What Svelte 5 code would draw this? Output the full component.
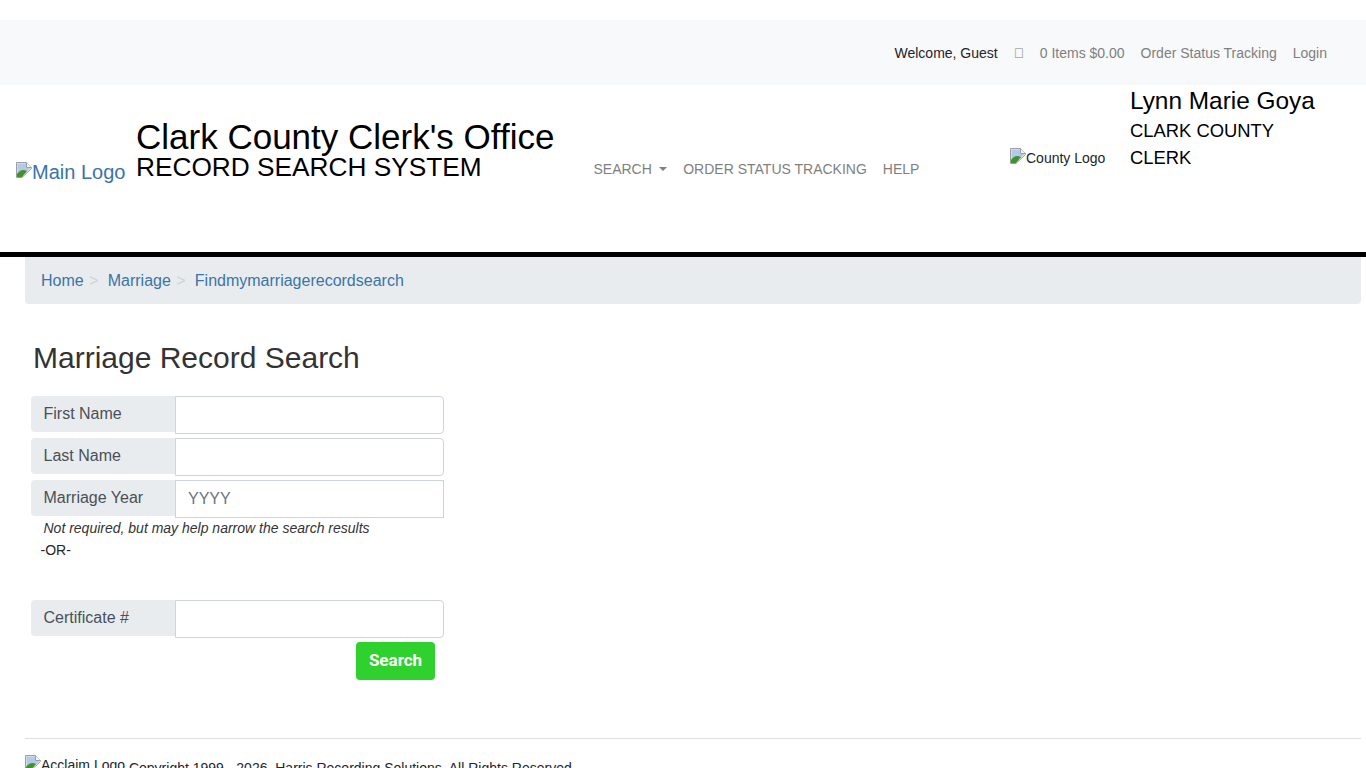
<script>
	const crumbs = ['Home', 'Marriage', 'Findmymarriagerecordsearch'];
	const nameRows = [
		{ label: 'First Name', placeholder: '', square: false },
		{ label: 'Last Name', placeholder: '', square: false },
		{ label: 'Marriage Year', placeholder: 'YYYY', square: true }
	];
</script>

{#snippet broken()}
	<svg class="broken" viewBox="0 0 16 16" width="16" height="16" aria-hidden="true">
		<path d="M.5.5h10l5 5v1L6 15.500H.5z" fill="#e8edf4" stroke="#9a9ea5" />
		<path d="M1.500 1.500h8.500v4.500h4.500L5.500 14.500h-4z" fill="#b4c9e6" />
		<path d="M1 15v-3c3-4 6-5 10-3l-5 6z" fill="#3f9429" />
		<path d="M10.500.5v5h5" fill="#f4f4f4" stroke="#9a9ea5" />
	</svg>
{/snippet}

<div class="top">
	<span class="welcome">Welcome, Guest</span>
	<a href="#cart" class="tofu">&#xf07a;</a>
	<a href="#cart">0 Items $0.00</a>
	<a href="#status">Order Status Tracking</a>
	<a href="#login">Login</a>
</div>

<header>
	<a href="#home" class="main-logo">{@render broken()}Main Logo</a>
	<div class="office">
		<div class="office-name">Clark County Clerk's Office</div>
		<div class="office-sub">RECORD SEARCH SYSTEM</div>
	</div>
	<nav>
		<a href="#search">SEARCH <i class="caret"></i></a>
		<a href="#status">ORDER STATUS TRACKING</a>
		<a href="#help">HELP</a>
	</nav>
	<div class="county-logo">{@render broken()}County Logo</div>
	<div class="clerk">
		<div class="clerk-name">Lynn Marie Goya</div>
		<div class="clerk-title">CLARK COUNTY CLERK</div>
	</div>
</header>

<main>
	<ol class="crumbs">
		{#each crumbs as crumb, i}
			{#if i > 0}<li class="sep">&gt;</li>{/if}
			<li><a href="#crumb">{crumb}</a></li>
		{/each}
	</ol>

	<h1>Marriage Record Search</h1>

	<form>
		{#each nameRows as row}
			<div class="group">
				<span class="addon">{row.label}</span>
				<input type="text" class:square={row.square} placeholder={row.placeholder} />
			</div>
		{/each}
		<p class="hint">Not required, but may help narrow the search results</p>
		<p class="or">-OR-</p>
		<div class="group cert">
			<span class="addon">Certificate #</span>
			<input type="text" />
		</div>
		<div class="actions">
			<button type="button">Search</button>
		</div>
	</form>

	<footer>
		<span class="acclaim">{@render broken()}Acclaim Logo</span>
		Copyright 1999 - 2026, Harris Recording Solutions. All Rights Reserved.
	</footer>
</main>

<style>
	:global(body) {
		margin: 0;
		overflow: hidden;
		background: #fff;
		font-family: "Liberation Sans", Arial, sans-serif;
		font-size: 16px;
		color: #212529;
	}

	a {
		text-decoration: none;
		color: #3a74a8;
	}

	.top {
		margin-top: 20px;
		height: 65px;
		padding-right: 39px;
		display: flex;
		justify-content: flex-end;
		align-items: center;
		gap: 16px;
		background: #f8f9fa;
		font-size: 14px;
		box-sizing: border-box;
	}

	.top a {
		color: #7f7f7f;
	}

	.tofu {
		width: 10px;
		font-size: 14px;
		overflow: hidden;
	}

	header {
		height: 167px;
		display: flex;
		align-items: flex-start;
		border-bottom: 5px solid #000;
	}

	.broken {
		flex: none;
		vertical-align: top;
	}

	.main-logo {
		margin: 77px 0 0 16px;
		width: 110px;
		font-size: 20px;
		line-height: 20px;
		white-space: nowrap;
	}

	.office {
		margin: 33px 0 0 10px;
		width: 458px;
		color: #000;
	}

	.office-name {
		font-size: 35px;
		line-height: 38px;
	}

	.office-sub {
		font-size: 26.25px;
		line-height: 22px;
	}

	nav {
		display: flex;
		gap: 16px;
		margin-top: 76px;
		margin-left: -0.5px;
		width: 416.5px;
		font-size: 14px;
		line-height: 16px;
	}

	nav a {
		color: #7f7f7f;
	}

	.caret {
		display: inline-block;
		margin-left: 3.5px;
		vertical-align: 3px;
		border-top: 4px solid #7f7f7f;
		border-left: 4px solid transparent;
		border-right: 4px solid transparent;
	}

	.county-logo {
		margin-top: 63px;
		width: 120px;
		font-size: 14px;
		line-height: 20px;
		white-space: nowrap;
	}

	.clerk {
		width: 200px;
		color: #000;
	}

	.clerk-name {
		font-size: 24.4px;
		line-height: 32px;
	}

	.clerk-title {
		font-size: 18.4px;
		line-height: 27px;
		width: 160px;
	}

	main {
		padding: 0 5px 0 25px;
	}

	.crumbs {
		margin: 0;
		padding: 0 16px;
		height: 47px;
		display: flex;
		align-items: center;
		list-style: none;
		background: #e9ecef;
		border-radius: 0 0 4px 4px;
	}

	.sep {
		width: 24px;
		padding-right: 4px;
		box-sizing: border-box;
		text-align: center;
		color: #ced2d6;
		font-size: 16px;
	}

	h1 {
		margin: 36px 0 20px 8px;
		font-size: 30px;
		font-weight: 400;
		line-height: 36px;
		color: #333;
	}

	form {
		margin-left: 6px;
		width: 413px;
		display: flex;
		flex-direction: column;
		gap: 4px;
	}

	.group {
		display: flex;
		height: 38px;
	}

	.addon {
		width: 144px;
		height: 36px;
		padding-left: 12.5px;
		box-sizing: border-box;
		background: #e9ecef;
		border-radius: 4px 0 0 4px;
		line-height: 35px;
		color: #495057;
	}

	input {
		width: 269px;
		height: 38px;
		box-sizing: border-box;
		padding: 0 12px;
		border: 1px solid #ced4da;
		border-radius: 0 4px 4px 0;
		font: inherit;
	}

	input.square {
		border-radius: 0;
	}

	input::placeholder {
		color: #6c757d;
	}

	.hint {
		margin: -2px 0 0 12.5px;
		font-size: 14px;
		font-style: italic;
		line-height: 16px;
		height: 16px;
		color: #333;
	}

	.or {
		margin: 2px 0 0 9.5px;
		font-size: 14px;
		line-height: 16px;
	}

	.cert {
		margin-top: 38px;
	}

	.actions {
		display: flex;
		justify-content: flex-end;
		padding-right: 9px;
	}

	button {
		width: 79px;
		height: 38px;
		padding: 0 0 2px;
		border: 0;
		border-radius: 4px;
		background: #2ed12e;
		color: #fff;
		font: 700 17px Roboto, sans-serif;
	}

	footer {
		margin-top: 58px;
		padding-top: 19px;
		border-top: 1px solid #dfdfdf;
		font-size: 14px;
		line-height: 20px;
		white-space: nowrap;
	}

	.acclaim {
		position: relative;
		top: -3px;
		font-size: 14px;
	}
</style>
